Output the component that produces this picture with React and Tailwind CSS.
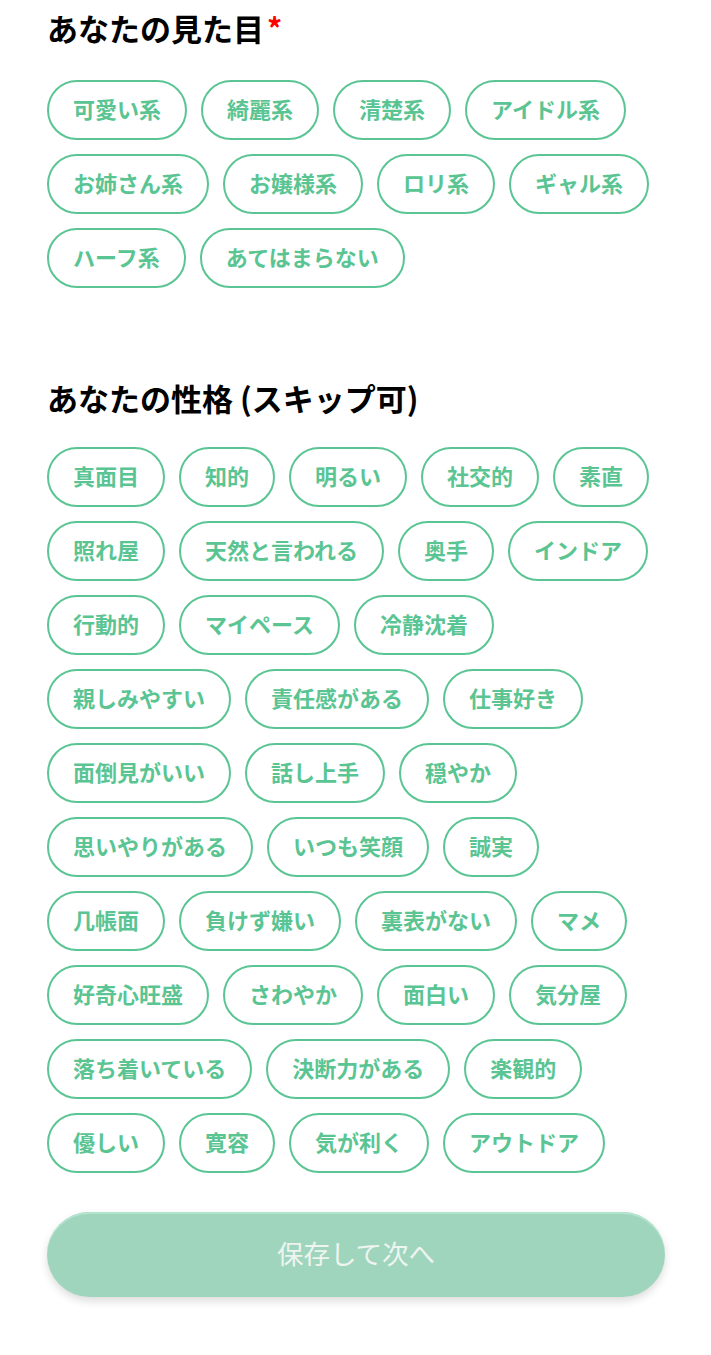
import React from "react";

const looks = ["可愛い系", "綺麗系", "清楚系", "アイドル系", "お姉さん系", "お嬢様系", "ロリ系", "ギャル系", "ハーフ系", "あてはまらない"];
const traits = [
  "真面目", "知的", "明るい", "社交的", "素直",
  "照れ屋", "天然と言われる", "奥手", "インドア",
  "行動的", "マイペース", "冷静沈着",
  "親しみやすい", "責任感がある", "仕事好き",
  "面倒見がいい", "話し上手", "穏やか",
  "思いやりがある", "いつも笑顔", "誠実",
  "几帳面", "負けず嫌い", "裏表がない", "マメ",
  "好奇心旺盛", "さわやか", "面白い", "気分屋",
  "落ち着いている", "決断力がある", "楽観的",
  "優しい", "寛容", "気が利く", "アウトドア",
];

function Chip({ label }) {
  return (
    <button
      type="button"
      className="h-[60px] inline-flex items-center px-6 pb-[4px] rounded-full border-2 border-[#5ac593] bg-white text-[#5ac593] text-[22px] leading-[32px] font-bold whitespace-nowrap"
    >
      {label}
    </button>
  );
}

export default function App() {
  return (
    <div
      className="w-[711px] min-h-[1355px] bg-white pt-[5px] pb-[58px]"
      style={{ fontFamily: '"Noto Sans CJK JP", "Noto Sans", sans-serif' }}
    >
      <div className="ml-[47px] w-[618px]">
        <div className="flex items-start">
          <h2 className="text-[31px] leading-[45px] font-bold text-black">あなたの見た目</h2>
          <span className="text-[30px] leading-[44px] font-bold text-[#ff0000] ml-[3px]">*</span>
        </div>
        <div className="mt-[30px] flex flex-wrap gap-[14px]">
          {looks.map((l) => (
            <Chip key={l} label={l} />
          ))}
        </div>

        <h2 className="mt-[87px] text-[31px] leading-[45px] font-bold text-black">あなたの性格 (スキップ可)</h2>
        <div className="mt-[27px] flex flex-wrap gap-[14px]">
          {traits.map((l) => (
            <Chip key={l} label={l} />
          ))}
        </div>

        <button
          type="button"
          className="mt-[39px] w-full h-[85px] pb-[4px] rounded-full bg-[#a0d5bd] text-[#eef4f0] text-[26.5px] shadow-[0_4px_8px_rgba(0,0,0,0.14),inset_0_2px_0_rgba(180,228,206,0.9)]"
        >
          保存して次へ
        </button>
      </div>
    </div>
  );
}
